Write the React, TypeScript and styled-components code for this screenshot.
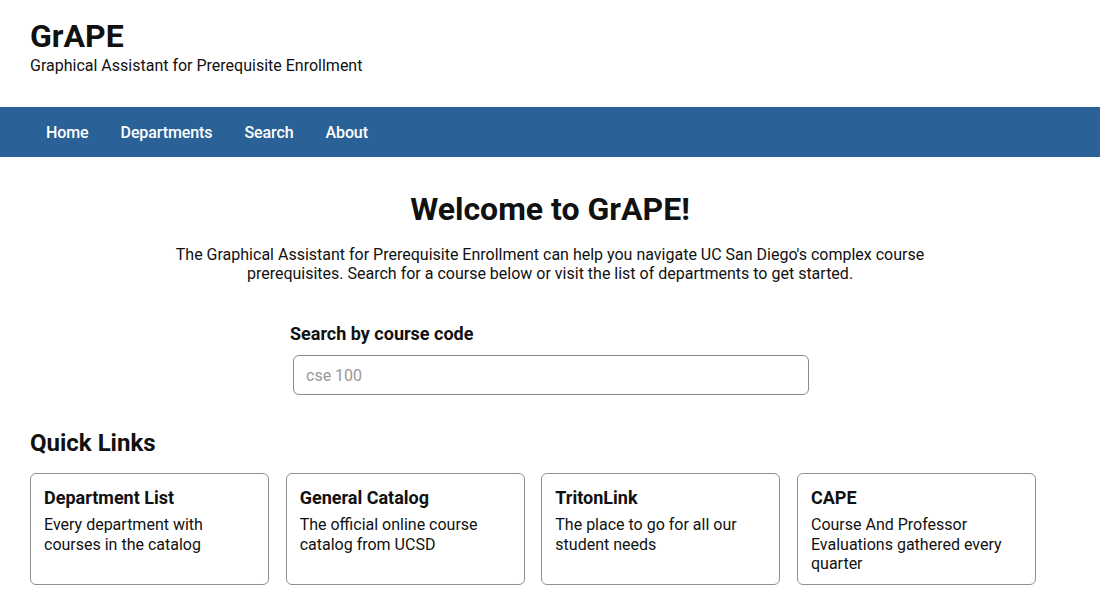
import React from "react";
import styled, { createGlobalStyle } from "styled-components";

const Global = createGlobalStyle`
  * { box-sizing: border-box; }
  body { margin: 0; background: #fff; font-family: Roboto, "Liberation Sans", sans-serif; color: #111; }
`;

const Header = styled.header`
  padding: 18px 30px 32px;
`;

const Logo = styled.h1`
  margin: 0;
  font-size: 32px;
  font-weight: 700;
  line-height: 37.5px;
`;

const Tagline = styled.div`
  font-size: 16px;
  line-height: 19px;
`;

const Nav = styled.nav`
  display: flex;
  align-items: center;
  height: 50px;
  padding: 1px 30px 0;
  background: #2a6297;
`;

const NavLink = styled.a`
  padding: 0 16px;
  color: #fff;
  font-size: 16px;
  font-weight: 500;
  letter-spacing: -0.1px;
  text-decoration: none;
`;

const Main = styled.main`
  padding: 0 30px;
  display: flex;
  flex-direction: column;
  align-items: center;
`;

const Title = styled.h2`
  margin: 34px 0 0;
  font-size: 32px;
  font-weight: 700;
  line-height: 37.5px;
  text-align: center;
`;

const Intro = styled.p`
  margin: 17px 0 0;
  max-width: 800px;
  font-size: 16px;
  line-height: 19px;
  text-align: center;
`;

const SearchBox = styled.section`
  width: 520px;
  margin-top: 40px;
  display: flex;
  flex-direction: column;
`;

const SearchLabel = styled.label`
  font-size: 18px;
  font-weight: 700;
  line-height: 21px;
`;

const SearchInput = styled.input`
  margin: 11px 0 0 3px;
  height: 40px;
  width: 516px;
  border: 1px solid #8a8a8a;
  border-radius: 6px;
  padding: 0 12px;
  font-family: inherit;
  font-size: 16px;
  color: #111;
  &::placeholder { color: #999; }
`;

const QuickSection = styled.section`
  align-self: stretch;
  margin-top: 34px;
`;

const QuickTitle = styled.h2`
  margin: 0;
  font-size: 24px;
  font-weight: 700;
  line-height: 28px;
`;

const CardRow = styled.div`
  display: grid;
  grid-template-columns: repeat(4, 239px);
  column-gap: 16.67px;
  margin-top: 16px;
`;

const Card = styled.a`
  display: flex;
  flex-direction: column;
  gap: 7px;
  padding: 13px 13px 10px;
  border: 1px solid #8f8f8f;
  border-radius: 6px;
  color: #111;
  text-decoration: none;
`;

const CardTitle = styled.div`
  font-size: 18px;
  font-weight: 700;
  line-height: 21px;
`;

const CardText = styled.div`
  font-size: 16px;
  line-height: 19.5px;
`;

const links = [
  { title: "Department List", text: "Every department with courses in the catalog" },
  { title: "General Catalog", text: "The official online course catalog from UCSD" },
  { title: "TritonLink", text: "The place to go for all our student needs" },
  { title: "CAPE", text: "Course And Professor Evaluations gathered every quarter" },
];

export default function App() {
  return (
    <>
      <Global />
      <Header>
        <Logo>GrAPE</Logo>
        <Tagline>Graphical Assistant for Prerequisite Enrollment</Tagline>
      </Header>
      <Nav>
        <NavLink href="#">Home</NavLink>
        <NavLink href="#">Departments</NavLink>
        <NavLink href="#">Search</NavLink>
        <NavLink href="#">About</NavLink>
      </Nav>
      <Main>
        <Title>Welcome to GrAPE!</Title>
        <Intro>
          The Graphical Assistant for Prerequisite Enrollment can help you navigate UC San Diego's complex course
          prerequisites. Search for a course below or visit the list of departments to get started.
        </Intro>
        <SearchBox>
          <SearchLabel htmlFor="search">Search by course code</SearchLabel>
          <SearchInput id="search" placeholder="cse 100" />
        </SearchBox>
        <QuickSection>
          <QuickTitle>Quick Links</QuickTitle>
          <CardRow>
            {links.map((l) => (
              <Card key={l.title} href="#">
                <CardTitle>{l.title}</CardTitle>
                <CardText>{l.text}</CardText>
              </Card>
            ))}
          </CardRow>
        </QuickSection>
      </Main>
    </>
  );
}
